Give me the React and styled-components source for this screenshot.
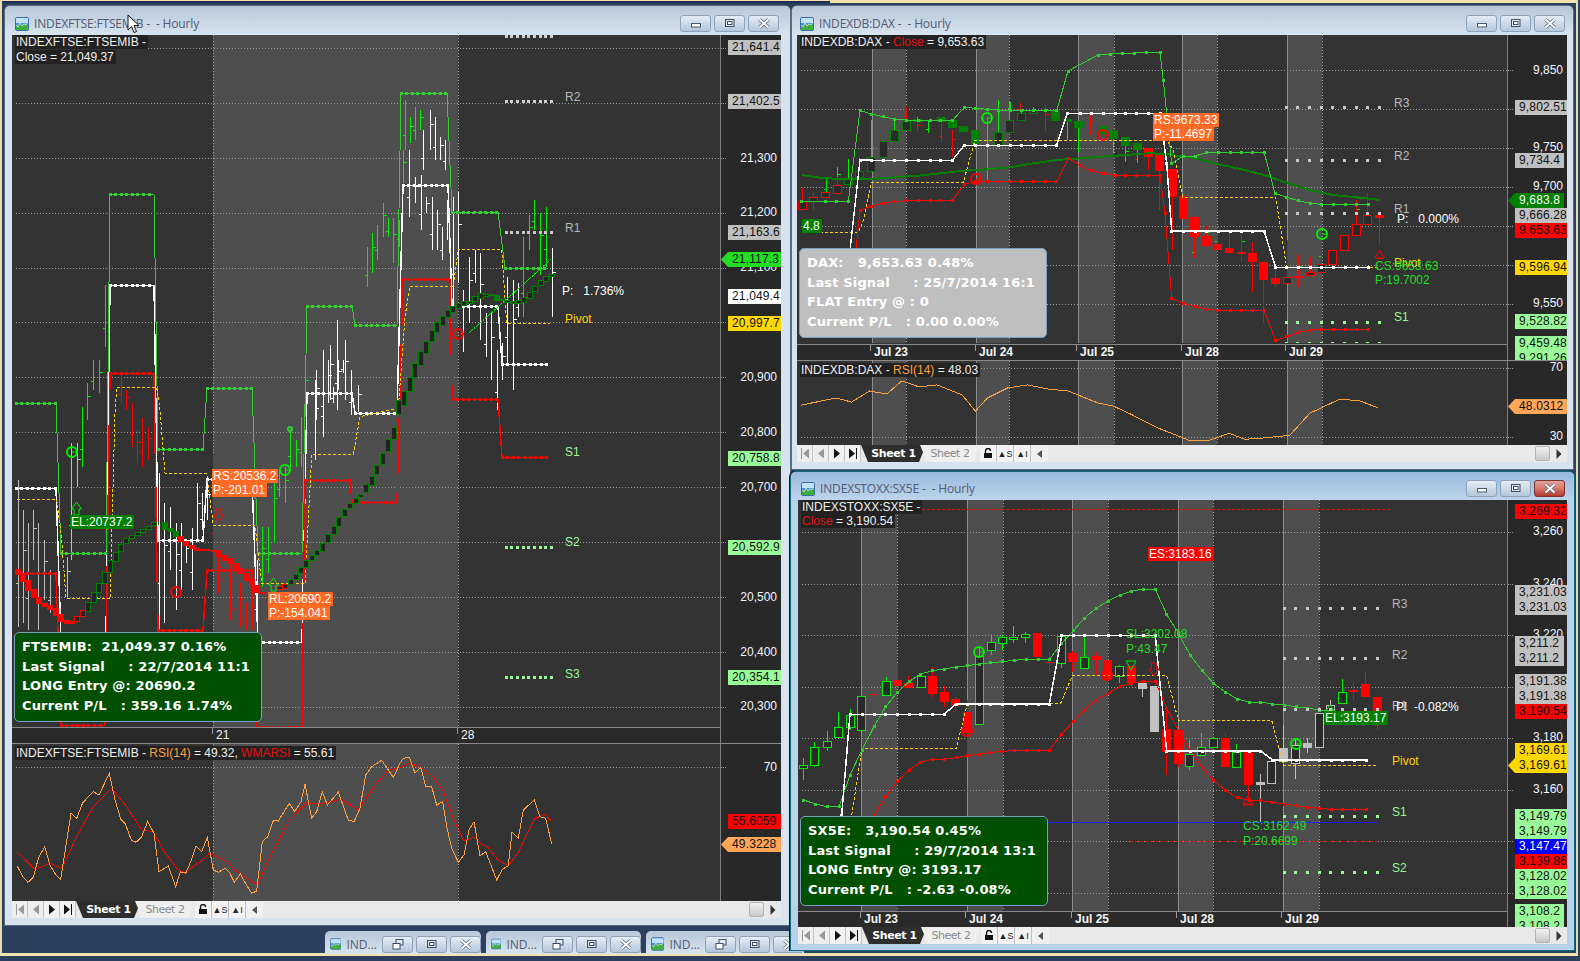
import React from "react";
import styled, { createGlobalStyle } from "styled-components";

const Global = createGlobalStyle`
  html, body { margin: 0; padding: 0; background: #2d3f5e; overflow: hidden; }
  * { box-sizing: border-box; }
`;

const SANS = `"Liberation Sans", Arial, sans-serif`;

const Desktop = styled.div`
  position: relative; width: 1580px; height: 961px; overflow: hidden; background: #2d3f5e;
`;
const OuterFrame = styled.div`
  position: absolute; left: 0; top: 0; width: 1578px; height: 956px;
  border-top: 3px solid #f3e3ac; border-bottom: 3px solid #f3e3ac;
  border-left: 2px solid #e8dcae; border-right: 2px solid #e8dcae;
`;
const TopNavyEdge = styled.div`
  position: absolute; left: 2px; top: 1px; width: 828px; height: 2px; background: #1f2f52;
`;

const Win = styled.section`
  position: absolute; left: ${p => p.$l}px; top: ${p => p.$t}px; width: ${p => p.$w}px; height: ${p => p.$h}px;
  display: flex; flex-direction: column;
  padding: 0 ${p => p.$pr}px ${p => p.$pb}px ${p => p.$pl}px;
  background: ${p => (p.$active ? "#b9d2ec" : "#d7e3ef")};
  border-radius: 5px 5px 0 0;
  box-shadow: ${p => (p.$active ? "0 0 0 1px #0d6f80, -1px 0 0 1px #111" : "0 0 0 1px #5b6b7e")};
`;
const TitleBar = styled.header`
  flex: none; height: ${p => p.$h}px; display: flex; align-items: center; gap: 5px;
  padding: ${p => p.$pt}px 2px 0 3px;
  margin: 0 -${p => p.$pr}px 0 -${p => p.$pl}px;
  padding-left: ${p => p.$pl + 3}px; padding-right: ${p => p.$pr + 2}px;
  border-radius: 5px 5px 0 0;
  background: ${p => (p.$active ? "linear-gradient(#98b9dc, #bdd4ec)" : "linear-gradient(#b7c7d7, #d7e4f0)")};
`;
const TitleText = styled.span`
  font: 12px "Open Sans", sans-serif; color: #555a74; white-space: pre; letter-spacing: -0.15px;
`;
const TitleButtons = styled.div`
  margin-left: auto; display: flex; gap: 3px;
`;
const CapButton = styled.div`
  width: 31px; height: 17px; display: flex; align-items: center; justify-content: center;
  border: 1px solid ${p => (p.$close ? "#7c3030" : "#8ea2ba")}; border-radius: 3px;
  background: ${p => (p.$close ? "linear-gradient(#e3a49c 0%, #d8786c 50%, #b23a2c 100%)" : "linear-gradient(#e4edf5 0%, #ccdae8 50%, #b4c7da 100%)")};
`;
const Client = styled.div`
  flex: 1; display: flex; flex-direction: column; min-height: 0;
`;
const Pane = styled.div`
  flex: none; height: ${p => p.$h}px; display: flex; overflow: hidden;
  border-top: ${p => (p.$sep ? "1px solid #8a8a8a" : "none")};
`;
const PlotColumn = styled.div`
  flex: 1; min-width: 0; display: flex; flex-direction: column;
`;
const PlotBox = styled.div`
  flex: 1; min-height: 0; position: relative; overflow: hidden; background: #333333;
`;
const ChartSvg = styled.svg`
  display: block; position: absolute; left: 0; top: 0;
`;
const DateStrip = styled.div`
  flex: none; height: 16px; position: relative; background: #2a2a2a; border-top: 1px solid #8a8a8a;
`;
const DateLabel = styled.span`
  position: absolute; left: ${p => p.$x + 4}px; top: 0; font: ${p => (p.$bold ? "bold " : "")}12px/15px ${SANS}; color: #f4f4f4;
  &::before { content: ""; position: absolute; left: -4px; top: 0; width: 1px; height: 6px; background: #9a9a9a; }
`;
const Axis = styled.div`
  flex: none; width: ${p => p.$w}px; position: relative; overflow: hidden; background: #282828; border-left: 1px solid #808080;
`;
const AxisTick = styled.i`
  position: absolute; left: 0; top: ${p => p.$y}px; width: 5px; border-top: 1px dotted #9a9a9a;
`;
const AxisLabel = styled.span`
  position: absolute; right: 4px; top: ${p => p.$y - 7}px; font: 12px/14px ${SANS}; color: #f2f6ff;
`;
const PriceTag = styled.span`
  position: absolute; top: ${p => p.$y}px; height: 15px; left: ${p => (p.$arrow ? 0 : 7)}px;
  width: ${p => (p.$short ? (p.$arrow ? 56 : 49) : p.$arrow ? 60 : 53)}px;
  padding-left: ${p => (p.$arrow ? 11 : 4)}px;
  font: 12px/15px ${SANS}; letter-spacing: 0.15px; white-space: nowrap; overflow: hidden;
  color: ${p => p.$fg || "#111"}; background: ${p => p.$bg};
  clip-path: ${p => (p.$arrow ? "polygon(7px 0, 100% 0, 100% 100%, 7px 100%, 0 50%)" : "none")};
`;
const Legend = styled.div`
  position: absolute; left: ${p => p.$x}px; top: ${p => p.$y}px; display: flex; flex-direction: column; align-items: flex-start; gap: ${p => p.$gap || 0}px;
`;
const LegendLine = styled.div`
  background: #222222; color: #f0f0f0; font: 12px/14px ${SANS}; padding: 0 2px 0 1px; white-space: pre;
`;
const Tint = styled.span`
  color: ${p => p.$c};
`;
const SignalTag = styled.div`
  position: absolute; left: ${p => p.$x}px; top: ${p => p.$y}px; padding: 0 2px 0 1px;
  font: 12px/14px ${SANS}; white-space: pre; color: #fff; background: ${p => p.$bg};
`;
const InfoBox = styled.div`
  position: absolute; left: ${p => p.$x}px; top: ${p => p.$y}px; width: ${p => p.$w}px; height: ${p => p.$h}px;
  padding: 4px 0 0 7px; border: 1px solid #7b9fbe; border-radius: 5px;
  background: ${p => p.$bg}; color: #fff;
`;
const InfoLine = styled.div`
  font: bold 13px/19.7px "DejaVu Sans", sans-serif; white-space: pre; letter-spacing: 0.15px;
`;
const ChartText = styled.text`
  font: 12px ${SANS}; fill: ${p => p.$c}; white-space: pre;
`;
const SheetBar = styled.div`
  flex: none; height: 17px; display: flex; align-items: stretch; background: #e9e9e9;
`;
const NavBtn = styled.div`
  width: 16px; display: flex; align-items: center; justify-content: center;
  border-right: 1px solid #c4c4c4; background: ${p => (p.$dim ? "#eeeeee" : "#f1f1f1")};
`;
const SheetTab = styled.div`
  width: ${p => p.$w}px; margin-left: ${p => p.$ml || 0}px; display: flex; align-items: center; justify-content: center;
  font: ${p => (p.$on ? "bold" : "normal")} 11px "DejaVu Sans", sans-serif; letter-spacing: -0.45px;
  color: ${p => (p.$on ? "#ffffff" : "#8a8a8a")};
  background: ${p => (p.$on ? "#2e2e2e" : "#efefef")};
  clip-path: polygon(0 0, 100% 0, calc(100% - 7px) 100%, 7px 100%);
`;
const LockBtn = styled.div`
  width: 17px; display: flex; align-items: center; justify-content: center;
  font: 9px ${SANS}; color: #222; border-right: 1px solid #c0c0c0; background: #f2f2f2; white-space: pre;
`;
const LeftScroll = styled.div`
  width: 17px; margin-left: 0; display: flex; align-items: center; justify-content: center; background: #f0f0f0;
`;
const Thumb = styled.div`
  margin-left: auto; width: 15px; margin-top: 1px; margin-bottom: 1px; border: 1px solid #b4b4b4; border-radius: 2px;
  background: linear-gradient(#f2f2f2, #c8c8c8);
`;
const RightScroll = styled.div`
  width: 17px; display: flex; align-items: center; justify-content: center;
`;
const MiniWin = styled.div`
  position: absolute; left: ${p => p.$l}px; top: 931px; width: ${p => p.$w}px; height: 23px;
  display: flex; align-items: center; gap: 5px; padding: 3px 0 0 5px;
  border-radius: 5px 5px 0 0; background: linear-gradient(#b7c7d7, #d7e4f0);
`;
const MiniText = styled.span`
  font: 12px "Open Sans", sans-serif; color: #555a74; width: 31px;
`;
const MiniButtons = styled.div`
  display: flex; gap: 3px;
`;
const Cursor = styled.svg`
  position: absolute; left: 127px; top: 14px;
`;

/* ---------- icons ---------- */
const AppIcon = () => (
  <svg width="14" height="14" viewBox="0 0 14 14">
    <rect x="0.5" y="0.5" width="13" height="13" rx="1.5" fill="#4d90d6" stroke="#3a6ea8" />
    <rect x="1" y="1" width="12" height="5" fill="#bfe0f7" />
    <path d="M1 13V8l2 2 2-4 2 3 2-2 2 1 2-3v8z" fill="#3fae3f" />
    <path d="M1 8l2 2 2-4 2 3 2-2 2 1 2-3" fill="none" stroke="#fff" strokeWidth="0.6" />
  </svg>
);
const MinGlyph = () => (
  <svg width="12" height="8" viewBox="0 0 12 8"><rect x="1.5" y="3.5" width="9" height="3.5" fill="#fff" stroke="#4a5a70" /></svg>
);
const MaxGlyph = () => (
  <svg width="12" height="9" viewBox="0 0 12 9"><rect x="1.5" y="0.5" width="8.5" height="7" fill="#dfe8f1" stroke="#3e4e64" /><rect x="3.5" y="2.5" width="4.5" height="3" fill="#fff" stroke="#3e4e64" /></svg>
);
const RestoreGlyph = () => (
  <svg width="12" height="11" viewBox="0 0 12 11"><rect x="4" y="0.5" width="7" height="5.5" fill="#dfe8f1" stroke="#3e4e64" /><rect x="1" y="4.5" width="7" height="5.5" fill="#fff" stroke="#3e4e64" /></svg>
);
const CloseGlyph = () => (
  <svg width="14" height="11" viewBox="0 0 14 11"><path d="M2.5 1.5L11.5 9.5M11.5 1.5L2.5 9.5" stroke="#5b6b7f" strokeWidth="3.6" /><path d="M2.5 1.5L11.5 9.5M11.5 1.5L2.5 9.5" stroke="#fff" strokeWidth="2" /></svg>
);

const WindowTitle = ({ text, active, h, pt, pl, pr }) => (
  <TitleBar $h={h} $pt={pt} $pl={pl} $pr={pr} $active={active}>
    <AppIcon />
    <TitleText>{text}</TitleText>
    <TitleButtons>
      <CapButton><MinGlyph /></CapButton>
      <CapButton><MaxGlyph /></CapButton>
      <CapButton $close={active}><CloseGlyph /></CapButton>
    </TitleButtons>
  </TitleBar>
);

const Sheets = () => (
  <SheetBar>
    <NavBtn $dim><svg width="10" height="11" viewBox="0 0 10 11"><path d="M1.5 0v11" stroke="#999" /><path d="M9 0.5v10L3 5.5z" fill="#999" /></svg></NavBtn>
    <NavBtn $dim><svg width="8" height="11" viewBox="0 0 8 11"><path d="M7 0.5v10L1 5.5z" fill="#999" /></svg></NavBtn>
    <NavBtn><svg width="8" height="11" viewBox="0 0 8 11"><path d="M1 0.5v10L7 5.5z" fill="#111" /></svg></NavBtn>
    <NavBtn><svg width="10" height="11" viewBox="0 0 10 11"><path d="M8.5 0v11" stroke="#111" /><path d="M1 0.5v10L7 5.5z" fill="#111" /></svg></NavBtn>
    <SheetTab $on $w={65}>Sheet 1</SheetTab>
    <SheetTab $w={60} $ml={-6}>Sheet 2</SheetTab>
    <LockBtn><svg width="10" height="11" viewBox="0 0 10 11"><path d="M2.5 5V3a2.5 2.5 0 0 1 5 0" fill="none" stroke="#111" strokeWidth="1.4" /><rect x="1" y="5" width="8" height="5" fill="#111" /></svg></LockBtn>
    <LockBtn>{"▲S"}</LockBtn>
    <LockBtn>{"▲I"}</LockBtn>
    <LeftScroll><svg width="6" height="8" viewBox="0 0 6 8"><path d="M5 0v8L0 4z" fill="#555" /></svg></LeftScroll>
    <Thumb />
    <RightScroll><svg width="6" height="10" viewBox="0 0 6 10"><path d="M0.5 0v10L5.5 5z" fill="#333" /></svg></RightScroll>
  </SheetBar>
);

/* ---------- data helpers ---------- */
const z = (ox, oy, arr) => arr.map(r => (r.length === 3 ? [ox + r[0] / 3, oy + r[1] / 3, oy + r[2] / 3] : [ox + r[0] / 3, oy + r[1] / 3]));
const poly = pts => pts.map(p => p.map(v => +v.toFixed(1)).join(",")).join(" ");
const GREEN = "#00ee00", MID = "#33cc33", DARK = "#008000", RED = "#ff0000", WHITE = "#ffffff", GREY = "#c0c0c0", GOLD = "#ffd000", PALE = "#98f898", LBL = "#22dd22";

const L = ({ pts, c, w = 1, dash }) => (
  <polyline points={poly(pts)} fill="none" stroke={c} strokeWidth={w} strokeDasharray={dash} shapeRendering="crispEdges" />
);
const Squares = ({ pts, c, s = 3 }) => pts.map((p, i) => (
  <rect key={i} x={Math.round(p[0] - s / 2)} y={Math.round(p[1] - s / 2)} width={s} height={s} fill={c} />
));
const DotRun = ({ x1, x2, y, step, c, s = 3 }) => {
  const pts = [];
  for (let x = x1; x <= x2; x += step) pts.push([x, y]);
  return <Squares pts={pts} c={c} s={s} />;
};
const Background = ({ x0, y0, w, h, bands, grid, gx1, solid }) => (
  <>
    {bands.map(([a, b], i) => <rect key={i} x={a} y={y0} width={b - a} height={h} fill="#4e4e4e" />)}
    {grid.map((y, i) => <line key={i} x1={gx1} x2={x0 + w} y1={y + 0.5} y2={y + 0.5} stroke="#9a9a9a" strokeDasharray="1 2" shapeRendering="crispEdges" />)}
    {bands.map(([a, b], i) => (
      <g key={i}>
        <line x1={a + 0.5} x2={a + 0.5} y1={y0} y2={y0 + h} stroke={solid ? "#8c8c8c" : "#a0a0a0"} strokeDasharray={solid ? undefined : "1 2"} shapeRendering="crispEdges" />
        <line x1={b + 0.5} x2={b + 0.5} y1={y0} y2={y0 + h} stroke="#a0a0a0" strokeDasharray="1 2" shapeRendering="crispEdges" />
      </g>
    ))}
  </>
);
const Bars = ({ list, c, w = 1 }) => (
  <g shapeRendering="crispEdges" stroke={c} strokeWidth={w}>
    {list.map(([x, a, b], i) => {
      const X = Math.round(x) + 0.5, m = Math.round(a + (b - a) * (i % 2 ? 0.35 : 0.7)) + 0.5;
      return (
        <g key={i}>
          <line x1={X} x2={X} y1={a} y2={b} />
          <line x1={X} x2={X + (i % 2 ? 3 : -3)} y1={m} y2={m} />
        </g>
      );
    })}
  </g>
);
const CANDLE = {
  gh: ["#2a2a2a", GREEN, GREEN], dg: ["#2a2a2a", DARK, GREEN], gf: [DARK, DARK, GREEN], rh: ["#2a2a2a", RED, RED],
  rf: [RED, RED, RED], sf: [GREY, GREY, GREY], sh: ["#2a2a2a", GREY, GREY],
};
const Candles = ({ list, ox, oy, bw = 8 }) => (
  <g shapeRendering="crispEdges">
    {list.map(([X, w1, w2, b1, b2, k], i) => {
      const [f, s, wc] = CANDLE[k];
      const x = Math.round(ox + X / 3);
      return (
        <g key={i}>
          <line x1={x + 0.5} x2={x + 0.5} y1={oy + w1 / 3} y2={oy + w2 / 3} stroke={wc} />
          <rect x={x - bw / 2 + 0.5} y={Math.round(oy + b1 / 3) + 0.5} width={bw} height={Math.max(1, Math.round((b2 - b1) / 3))} fill={f} stroke={s} />
        </g>
      );
    })}
  </g>
);
const Ring = ({ x, y, c, r = 5 }) => (
  <g stroke={c} fill="none">
    <circle cx={x} cy={y} r={r} strokeWidth="2" />
    <line x1={x} x2={x + r} y1={y} y2={y} />
  </g>
);
const UpArrow = ({ x, y, c }) => (
  <path d={`M${x} ${y}l5 7h-2.5v6h-5v-6h-2.5z`} fill="none" stroke={c} />
);
const DownArrow = ({ x, y, c }) => (
  <path d={`M${x} ${y}l5 -7h-2.5v-6h-5v6h-2.5z`} fill="none" stroke={c} />
);

/* ---------- Left chart data ---------- */
const stepBand = (segs, c, w, step = 5.6) => (
  <g>
    {segs.map(([a, b, y], i) => (
      <g key={i}>
        <rect x={a} y={y - 0.5} width={b - a} height={1} fill={c} shapeRendering="crispEdges" />
        <DotRun x1={a} x2={b} y={y} step={step} c={c} s={3} />
        {segs[i + 1] && <L pts={[[b, y], [segs[i + 1][0], segs[i + 1][2]]]} c={c} w={w} />}
      </g>
    ))}
  </g>
);
const A_GREEN = [[16, 56, 403], [61, 106, 553], [110, 154, 194], [158, 203, 449], [207, 252, 388], [258, 302, 553], [307, 352, 306], [355, 397, 325], [401, 447, 93], [452, 498, 212], [505, 548, 268]];
const A_WHITE = [[16, 56, 488], [61, 106, 639], [110, 154, 285], [158, 203, 540], [207, 252, 479], [258, 302, 642], [307, 352, 393], [355, 397, 413], [403, 448, 185], [452, 498, 306], [502, 548, 364]];
const A_RED = [[16, 56, 573], [61, 105, 725], [110, 154, 373], [158, 203, 630], [207, 252, 570], [256, 302, 727], [305, 350, 480], [352, 397, 502], [403, 450, 279], [452, 498, 399], [502, 548, 457]];
const A_YEL = [...z(0, 360, [[52, 418], [170, 418], [185, 540], [198, 715], [330, 717], [345, 160], [350, 82], [470, 82], [480, 150], [495, 340], [620, 340], [640, 497], [765, 497], [785, 670], [915, 672], [935, 283], [1060, 283], [1080, 170]]), ...z(360, 150, [[115, 775], [135, 500], [150, 408], [280, 408], [295, 298], [425, 298], [440, 520], [570, 520]])];

const A_STAIR = [
  [52, 635, 15, "r"], [67, 650, 25, "r"], [82, 674, 30, "r"], [100, 700, 25, "r"], [116, 720, 18, "r"], [133, 733, 10, "r"], [148, 741, 12, "r"], [165, 753, 20, "r"], [180, 772, 20, "r"], [200, 785, 10, "r"], [215, 787, 5, "r"], [230, 777, 16, "h"], [247, 760, 18, "h"], [263, 738, 26, "d"], [280, 712, 30, "d"], [296, 684, 28, "d"], [313, 653, 34, "d"], [328, 618, 36, "d"], [345, 588, 26, "d"], [362, 562, 22, "d"], [377, 542, 14, "d"], [395, 530, 10, "d"], [412, 520, 10, "d"], [428, 512, 10, "d"], [445, 504, 10, "d"], [460, 490, 10, "d"], [493, 495, 20, "g"], [510, 509, 10, "g"], [527, 521, 16, "g"], [542, 535, 16, "r"], [557, 550, 12, "r"], [575, 561, 10, "r"], [590, 567, 5, "r"], [605, 569, 4, "r"], [620, 570, 4, "r"], [640, 570, 3, "r"], [655, 578, 18, "r"], [673, 591, 14, "r"], [690, 602, 14, "r"], [705, 618, 18, "r"], [720, 631, 16, "r"], [737, 648, 20, "r"], [753, 665, 16, "r"], [768, 687, 22, "r"], [785, 697, 4, "r"], [838, 682, 10, "h"], [853, 678, 12, "h"], [870, 665, 16, "d"], [885, 650, 16, "d"], [902, 630, 18, "d"], [917, 610, 20, "d"], [935, 592, 16, "d"], [950, 578, 14, "d"], [967, 560, 24, "d"], [983, 535, 24, "d"], [1000, 510, 24, "d"], [1016, 485, 26, "d"], [1032, 458, 20, "d"], [1048, 438, 16, "d"], [1065, 420, 14, "d"], [1080, 408, 10, "d"], [1095, 385, 24, "d"], [1113, 360, 26, "d"], [1130, 330, 28, "d"], [1146, 295, 32, "d"],
  [1163, 255, 36, "d"], [1180, 220, 36, "d"],
].map(([X, Y, h, k]) => [X / 3, 360 + Y / 3, h / 3, k]);
const A_STAIR2 = z(360, 150, [[115, 770], [130, 745], [148, 703], [163, 660], [181, 625], [197, 590], [214, 558], [230, 532], [247, 510], [262, 490], [278, 477], [295, 466], [310, 458], [328, 455], [344, 446], [360, 437], [375, 435], [392, 435], [408, 442], [425, 450], [440, 453], [458, 456], [475, 455], [490, 448], [508, 434], [523, 415], [541, 398], [557, 385], [573, 376]]);
const STAIR_H = [42, 42, 42, 42, 42, 36, 34, 30, 26, 22, 18, 14, 12, 6, 14, 14, 6, 4, 16, 4, 6, 6, 10, 16, 18, 16, 16, 14, 6];

const A_BARS = {
  grey: z(0, 360, [[55, 360, 800], [70, 450, 790], [85, 490, 810], [100, 450, 600], [115, 490, 810], [133, 540, 720], [150, 630, 760], [200, 590, 710], [213, 250, 600], [230, 250, 380]]),
  green: [...z(0, 360, [[245, 140, 320], [262, 70, 180], [280, 0, 90], [296, 0, 100], [315, -225, -40], [787, 500, 680], [805, 500, 640], [822, 340, 550], [838, 330, 410], [855, 320, 430], [870, 210, 320], [887, 240, 320], [903, 170, 320], [915, 0, 170]]),
    ...z(360, 150, [[20, 290, 410], [35, 250, 370], [50, 225, 330], [68, 160, 260], [85, 205, 260], [100, 205, 340], [118, 210, 290], [128, 0, 100], [135, -150, 0], [150, -100, -20], [165, -130, -30], [180, -120, -60], [490, 260, 500], [507, 195, 300], [523, 150, 240], [541, 190, 375], [557, 170, 350]])],
  red: z(0, 360, [[362, 40, 130], [378, 90, 150], [395, 130, 260], [410, 210, 310], [427, 175, 320], [445, 200, 300], [640, 280, 620], [655, 580, 700], [670, 580, 690], [690, 600, 780], [705, 680, 770], [720, 670, 800], [738, 730, 810], [755, 700, 810]]),
  white: [...z(0, 360, [[478, 340, 810], [493, 430, 790], [510, 440, 630], [527, 490, 750], [542, 490, 690], [558, 540, 610], [575, 505, 690], [590, 370, 540], [605, 400, 510], [620, 360, 480], [770, 600, 810], [945, 60, 300], [968, 20, 230], [985, 0, 130], [1000, 80, 130], [1015, 0, 90], [1030, 0, 40]]),
    [316, 370, 420], [323, 350, 430], [330, 345, 400], [337, 320, 410], [345, 340, 400], [351, 370, 415], [358, 385, 412],
    ...z(360, 150, [[148, 0, 200], [165, 80, 160], [182, 75, 240], [198, 140, 190], [215, 140, 300], [230, 180, 300], [247, 230, 330], [262, 150, 270], [278, 140, 470], [295, 125, 400], [310, 420, 605], [328, 320, 520], [345, 300, 400], [360, 310, 570], [378, 490, 620], [392, 490, 690], [410, 600, 780], [425, 580, 690], [442, 380, 640], [458, 390, 720], [475, 400, 500], [575, 295, 500], [190, -60, 60], [210, -120, 0], [225, -100, 30], [240, -40, 30], [255, -30, 60]])],
};
const RSI_O = [...z(0, 620, [[52, 738], [68, 770], [84, 787], [100, 772], [116, 712], [134, 680], [150, 735], [168, 765], [182, 778], [213, 580], [230, 595], [248, 548], [280, 515], [297, 525], [328, 460], [345, 540], [362, 597], [376, 612], [394, 660], [408, 667], [425, 650], [443, 604], [462, 640], [477, 755], [505, 738], [527, 800], [541, 755], [557, 760], [572, 725], [588, 677], [605, 695], [622, 652], [640, 750], [655, 757], [675, 745], [690, 760], [703, 787], [721, 762], [738, 793], [755, 820], [770, 813], [787, 665], [803, 650], [820, 602], [835, 603], [868, 550], [884, 575], [903, 545], [915, 493], [935, 595], [950, 575], [967, 515], [982, 555], [1015, 517], [1045, 600], [1062, 605], [1080, 565], [1097, 465], [1115, 440], [1145, 421], [1180, 472]]),
  ...z(400, 700, [[0, 190], [10, 175], [28, 172], [45, 220], [62, 202], [77, 260], [95, 260], [110, 315], [128, 305], [140, 380], [155, 445], [175, 487], [192, 465], [207, 390], [222, 365], [240, 468], [257, 455], [290, 540], [307, 508], [325, 497], [336, 397], [355, 415], [370, 330], [403, 300], [420, 350], [437, 355], [455, 432]])];
const RSI_R = [...z(0, 620, [[52, 697], [105, 748], [150, 730], [185, 745], [230, 650], [280, 560], [335, 505], [380, 560], [425, 630], [460, 635], [490, 690], [530, 745], [555, 760], [585, 735], [610, 720], [628, 700], [680, 725], [705, 750], [740, 775], [772, 795], [810, 710], [865, 605], [920, 548], [960, 552], [1020, 538], [1075, 568], [1130, 490], [1165, 450]]),
  ...z(400, 700, [[0, 202], [30, 190], [62, 202], [97, 228], [128, 270], [160, 355], [190, 422], [222, 412], [240, 430], [262, 440], [295, 480], [325, 497], [355, 457], [403, 357], [435, 342], [453, 362]])];

/* ---------- DAX data ---------- */
const Z7 = a => z(790, 80, a), Z8 = a => z(1130, 80, a);
const D_GREEN = [...Z7([[35, 365], [107, 365], [140, 365], [175, 365], [210, 92], [245, 102], [280, 110], [312, 118], [350, 120], [385, 120], [420, 120], [452, 122], [487, 122], [523, 82], [557, 85], [592, 88], [625, 90], [660, 90], [695, 92], [730, 92], [765, 92], [800, 92]]), [1068, 71], [1098, 55], [1110, 54], [1122, 53], [1134, 53], [1146, 52], [1160, 52], ...Z8([[100, 0], [125, 250], [160, 228], [195, 228], [230, 218], [265, 216], [300, 216], [335, 216], [368, 216], [402, 216], [435, 340], [470, 352], [505, 362], [540, 370], [575, 373], [610, 373], [645, 373], [680, 373], [715, 373]])];
const D_RED = [...Z7([[198, 508], [210, 390], [245, 378], [280, 370], [312, 365], [350, 362], [385, 362], [420, 362], [452, 362], [487, 362], [523, 312], [557, 305], [592, 305], [625, 305], [660, 305], [695, 305], [730, 305], [765, 305], [800, 305], [835, 235], [870, 255], [905, 272], [940, 280], [975, 285], [1005, 286], [1040, 286], [1075, 286], [1110, 286], [1125, 400]]), ...Z8([[125, 655], [160, 670], [195, 680], [230, 688], [265, 691], [300, 691], [335, 691], [368, 691], [402, 690], [437, 782], [470, 770], [505, 757], [540, 750], [575, 748], [610, 748], [645, 748], [680, 748], [715, 748]])];
const D_WHITE = [...Z7([[180, 510], [210, 240], [245, 241], [280, 241], [312, 241], [350, 241], [385, 241], [420, 241], [452, 241], [487, 241], [523, 196], [557, 196], [592, 196], [625, 196], [660, 196], [695, 196], [730, 196], [765, 196], [800, 196], [832, 100], [870, 100], [905, 100], [940, 100], [975, 100], [1005, 100], [1040, 100], [1075, 100], [1110, 100], [1130, 250]]), ...Z8([[125, 453], [160, 453], [195, 453], [230, 453], [265, 453], [300, 453], [335, 453], [368, 453], [402, 453], [437, 562], [470, 562], [505, 562], [540, 562], [575, 562], [610, 562], [645, 562], [680, 562], [715, 562]])];
const D_YEL = [...Z7([[90, 458], [205, 458], [220, 420], [245, 307], [520, 307], [555, 180], [1130, 180], [1150, 210]]), ...Z8([[158, 352], [437, 352], [470, 562], [750, 562]])];
const D_MA = [...Z7([[35, 285], [105, 295], [175, 297], [245, 297], [310, 292], [385, 287], [452, 280], [523, 272], [592, 268], [660, 262], [730, 250], [800, 240], [870, 235], [940, 230], [1005, 225], [1075, 220], [1145, 222]]), ...Z8([[125, 225], [195, 235], [265, 253], [335, 268], [402, 285], [470, 308], [540, 330], [610, 345], [680, 352], [750, 360]])];
const D_C7 = [
  [37, 325, 388, 363, 388, "rh"], [70, 340, 390, 352, 365, "rh"], [105, 320, 352, 337, 352, "rh"], [140, 290, 337, 314, 337, "rh"],
  [175, 238, 315, 295, 314, "dg"], [208, 235, 290, 272, 290, "dg"], [243, 120, 272, 230, 272, "dg"], [278, 182, 230, 182, 230, "dg"], [312, 115, 183, 150, 183, "dg"], [347, 118, 148, 122, 148, "dg"], [380, 112, 122, 116, 122, "dg"], [452, 112, 124, 112, 124, "gf"], [487, 120, 140, 120, 140, "gf"], [520, 138, 152, 138, 152, "gf"], [556, 150, 190, 150, 190, "gf"], [625, 60, 193, 155, 193, "dg"], [658, 65, 155, 120, 155, "dg"], [694, 88, 122, 100, 122, "dg"], [728, 80, 100, 90, 100, "dg"], [795, 92, 120, 92, 120, "gf"], [830, 118, 180, 118, 125, "gf"], [865, 123, 215, 123, 140, "gf"], [938, 138, 158, 138, 158, "gf"], [970, 150, 220, 150, 173, "gf"], [1005, 172, 247, 172, 195, "gf"], [1040, 190, 250, 190, 207, "gf"],
  [1075, 205, 270, 205, 230, "rf"], [1108, 225, 390, 225, 270, "rf"], [1145, 268, 510, 268, 350, "rf"], [1178, 348, 530, 348, 415, "rf"],
];
const D_C8 = [
  [193, 412, 535, 412, 470, "rf"], [227, 437, 500, 468, 495, "rf"], [262, 455, 506, 492, 506, "rf"], [297, 455, 518, 505, 518, "rf"], [332, 450, 545, 516, 520, "rf"], [367, 485, 635, 520, 545, "rf"], [400, 545, 730, 545, 597, "rf"], [436, 565, 622, 594, 609, "rf"], [470, 480, 607, 590, 607, "rh"], [505, 525, 620, 588, 592, "rf"], [540, 530, 586, 577, 586, "rh"], [574, 470, 578, 553, 578, "rh"], [607, 511, 554, 511, 554, "rh"], [643, 466, 511, 466, 511, "rh"], [677, 360, 466, 433, 466, "rh"], [712, 340, 433, 405, 433, "rh"], [747, 404, 495, 404, 409, "rf"],
];
const D_BARS_G = [...Z7([[107, 297, 340], [140, 262, 315], [415, 120, 160], [590, 115, 300], [660, 65, 90], [1005, 195, 247]]), ...Z8([[193, 470, 535], [227, 437, 495], [262, 455, 495], [332, 450, 545], [436, 565, 622], [505, 525, 620], [574, 470, 553], [677, 360, 433]])];
const D_BARS_R = [...Z7([[347, 80, 122], [382, 123, 155], [452, 130, 185], [487, 150, 230], [690, 70, 95], [765, 75, 155], [800, 155, 190], [900, 100, 165], [1040, 207, 250]])];
const D_RSI = [[795, 402], [830, 395], [845, 399], [863, 388], [880, 391], [895, 378], [912, 384], [930, 382], [955, 392], [968, 408], [980, 395], [1000, 385], [1020, 382], [1040, 386], [1060, 388], [1090, 400], [1105, 403], [1120, 410], [1150, 425], [1180, 437], [1200, 437], [1220, 430], [1235, 436], [1250, 435], [1280, 432], [1300, 410], [1330, 396], [1350, 398], [1368, 405]].map(([x, y]) => [x / 0.9924, y / 0.9924]);

/* ---------- SX5E data ---------- */
const Z9 = a => z(800, 540, a), Z10 = a => z(1130, 640, a);
const S_GREEN = [...Z9([[10, 780], [47, 792], [82, 800], [117, 800], [150, 705], [186, 630], [222, 560], [257, 500], [292, 457], [327, 425], [362, 402], [397, 392], [432, 387], [468, 381], [502, 377], [538, 372], [572, 368], [607, 365], [643, 361], [679, 358], [714, 358], [748, 358], [785, 310], [820, 272], [853, 235], [888, 205], [925, 183], [960, 165], [995, 153], [1030, 148], [1066, 148], [1100, 223], [1135, 280], [1170, 345]]), ...Z10([[180, 45], [217, 92], [250, 130], [287, 157], [322, 177], [357, 186], [392, 186], [428, 192], [463, 195], [498, 200], [533, 205], [568, 210], [603, 212]])];
const S_RED = [...Z9([[222, 825], [257, 770], [292, 724], [327, 690], [362, 667], [397, 657], [432, 657], [468, 653], [502, 647], [538, 643], [572, 637], [607, 635], [643, 631], [679, 631], [714, 631], [748, 631], [785, 583], [820, 545], [853, 510], [888, 480], [925, 460], [960, 440], [995, 430], [1030, 424], [1066, 424]]), ...Z10([[110, 205], [145, 270], [180, 330], [217, 382], [250, 420], [287, 452], [322, 472], [357, 482], [392, 482], [428, 487], [463, 492], [498, 497], [533, 502], [568, 505], [603, 508], [638, 508], [673, 508], [708, 508]])];
const S_WHITE = [...Z9([[125, 825], [150, 523], [186, 523], [222, 523], [257, 523], [292, 523], [327, 523], [362, 523], [397, 523], [432, 523], [468, 492], [502, 492], [538, 492], [572, 492], [607, 492], [643, 492], [679, 492], [714, 492], [748, 492], [785, 287], [820, 287], [853, 287], [888, 287], [925, 287], [960, 287], [995, 287], [1030, 287], [1066, 287], [1100, 633], [1135, 633]]), ...Z10([[145, 333], [180, 333], [217, 333], [250, 333], [287, 333], [322, 333], [357, 333], [392, 333], [428, 360], [463, 360], [498, 360], [533, 360], [568, 360], [603, 360], [638, 360], [673, 360], [710, 360]])];
const S_YEL = [...Z9([[155, 825], [186, 626], [468, 626], [502, 492], [782, 490], [817, 407], [1100, 407], [1135, 541]]), ...Z10([[425, 241], [460, 375], [740, 375]])];
const S_C9 = [
  [10, 655, 720, 675, 683, "gh"], [43, 605, 682, 622, 677, "gh"], [80, 573, 632, 604, 622, "gh"], [115, 515, 592, 562, 592, "gh"], [149, 508, 570, 524, 560, "gh"], [184, 445, 570, 469, 570, "gh"],
  [257, 410, 465, 422, 463, "gh"], [290, 370, 435, 420, 435, "rf"], [325, 407, 442, 430, 442, "rf"], [362, 408, 440, 408, 440, "gh"], [395, 382, 470, 408, 458, "rf"], [431, 437, 502, 456, 482, "rf"], [466, 472, 515, 478, 495, "rf"], [502, 480, 645, 515, 575, "rf"], [537, 325, 553, 348, 553, "gh"], [572, 283, 345, 307, 332, "gh"], [607, 285, 330, 292, 310, "gh"], [640, 258, 310, 292, 297, "gh"], [676, 277, 310, 283, 292, "gh"], [712, 279, 347, 279, 347, "rf"], [782, 287, 385, 287, 367, "gh"], [817, 333, 395, 340, 365, "rf"], [853, 287, 385, 350, 383, "gh"], [887, 335, 405, 349, 358, "rf"], [922, 360, 415, 360, 415, "rf"], [958, 375, 430, 377, 408, "gh"], [994, 378, 440, 378, 425, "rf"], [1027, 425, 472, 428, 443, "sf"], [1063, 438, 572, 438, 572, "sf"], [1099, 510, 705, 568, 635, "rf"], [1133, 570, 680, 570, 670, "rf"], [1168, 600, 690, 643, 680, "gh"],
];
const S_C10 = [
  [214, 280, 347, 322, 347, "gh"], [250, 295, 323, 295, 323, "gh"], [284, 280, 380, 295, 380, "rf"], [319, 312, 380, 335, 380, "gh"], [355, 335, 485, 335, 430, "rf"], [389, 402, 545, 427, 433, "sf"], [424, 362, 428, 362, 428, "sh"], [460, 255, 365, 325, 365, "sf"], [496, 300, 418, 315, 370, "sh"], [530, 295, 340, 310, 322, "sf"], [566, 218, 320, 218, 320, "sh"], [601, 180, 215, 195, 215, "sh"], [635, 118, 188, 155, 187, "gh"], [670, 127, 180, 150, 153, "rf"], [706, 97, 170, 133, 170, "rf"], [741, 170, 270, 172, 215, "rf"],
];

/* ---------- chart parts ---------- */
const AxisContent = ({ y0, ticks, labels, tags }) => (
  <>
    {ticks.map(t => <AxisTick key={t} $y={t - y0} />)}
    {labels.map(([y, s]) => <AxisLabel key={s} $y={y - y0}>{s}</AxisLabel>)}
    {tags.map(([y, s, bg, o = {}], i) => (
      <PriceTag key={i} $y={y - y0} $bg={bg} $fg={o.fg} $arrow={o.arrow} $short={o.short}>{s}</PriceTag>
    ))}
  </>
);
const TG = "#c0c0c0", TP = "#98fb98", TY = "#ffd700", TR = "#ff0000", TO = "#ffa658", TOR = "#ff6a26";

const ChartOne = () => {
  const ox = 12, oy = 35, w = 708, h = 692;
  const grid = [48, 103, 158, 213, 268, 322, 377, 432, 487, 542, 597, 652, 707];
  return (
    <Client>
      <Pane $h={708}>
        <PlotColumn>
          <PlotBox>
            <ChartSvg width={w} height={h} viewBox={`${ox} ${oy} ${w} ${h}`}>
              <Background x0={ox} y0={oy} w={w} h={h} bands={[[213, 458]]} grid={grid} gx1={16} />
              <Bars list={A_BARS.grey} c={GREY} />
              <Bars list={A_BARS.white} c={WHITE} />
              <Bars list={A_BARS.green} c={GREEN} />
              <Bars list={A_BARS.red} c={RED} />
              {stepBand(A_WHITE, WHITE, 1.5)}
              {stepBand(A_GREEN, MID, 1)}
              {stepBand(A_RED, RED, 1.5)}
              <L pts={A_YEL} c={GOLD} dash="3 2" />
              <L pts={z(360, 150, [[328, 548], [573, 328]])} c={GREEN} dash="2 1" />
              <g shapeRendering="crispEdges">
                {A_STAIR.map(([x, y, hh, k], i) => (
                  <rect key={i} x={Math.round(x - 2.5) + 0.5} y={Math.round(y - hh / 2) + 0.5} width={5} height={Math.max(1, Math.round(hh))}
                    fill={k === "r" ? RED : k === "g" ? DARK : "#222"} stroke={k === "r" || k === "h" ? RED : DARK} />
                ))}
                {A_STAIR2.map(([x, y], i) => (
                  <rect key={i} x={Math.round(x - 2.5) + 0.5} y={Math.round(y - STAIR_H[i] / 6) + 0.5} width={5} height={Math.max(1, Math.round(STAIR_H[i] / 3))}
                    fill={i === 18 ? DARK : "#222"} stroke={DARK} />
                ))}
              </g>
              <DotRun x1={506} x2={552} y={36} step={5.7} c="#d0d0d0" />
              <DotRun x1={506} x2={552} y={101} step={5.7} c="#d0d0d0" />
              <DotRun x1={506} x2={552} y={232} step={5.7} c="#c8c8c8" />
              <DotRun x1={506} x2={552} y={547} step={5.7} c={PALE} />
              <DotRun x1={506} x2={552} y={677} step={5.7} c={PALE} />
              <Ring x={72} y={452} c={GREEN} />
              <Ring x={285} y={470} c={GREEN} />
              <Ring x={290} y={429} c={MID} r={2} />
              <Ring x={176} y={592} c={RED} />
              <Ring x={458} y={334} c={RED} />
              <UpArrow x={76.5} y={502} c={GREEN} />
              <UpArrow x={273.5} y={578} c={GREEN} />
              <DownArrow x={218.5} y={522} c={RED} />
              <ChartText x={565} y={101} $c="#b8b8b8">R2</ChartText>
              <ChartText x={565} y={232} $c="#b8b8b8">R1</ChartText>
              <ChartText x={562} y={295} $c="#ffffff" xmlSpace="preserve">P:   1.736%</ChartText>
              <ChartText x={565} y={323} $c={GOLD}>Pivot</ChartText>
              <ChartText x={565} y={456} $c={PALE}>S1</ChartText>
              <ChartText x={565} y={546} $c={PALE}>S2</ChartText>
              <ChartText x={565} y={678} $c={PALE}>S3</ChartText>
            </ChartSvg>
            <Legend $x={3} $y={0} $gap={1}>
              <LegendLine>INDEXFTSE:FTSEMIB -</LegendLine>
              <LegendLine>Close = 21,049.37</LegendLine>
            </Legend>
            <SignalTag $x={58} $y={480} $bg={DARK}>EL:20737.2</SignalTag>
            <SignalTag $x={200} $y={434} $bg={TOR}>RS:20536.2</SignalTag>
            <SignalTag $x={200} $y={448} $bg={TOR}>P:-201.01</SignalTag>
            <SignalTag $x={256} $y={557} $bg={TOR}>RL:20690.2</SignalTag>
            <SignalTag $x={256} $y={571} $bg={TOR}>P:-154.041</SignalTag>
            <InfoBox $x={2} $y={597} $w={248} $h={90} $bg="#005000">
              <InfoLine>FTSEMIB:  21,049.37 0.16%</InfoLine>
              <InfoLine>Last Signal     : 22/7/2014 11:1</InfoLine>
              <InfoLine>LONG Entry @: 20690.2</InfoLine>
              <InfoLine>Current P/L   : 359.16 1.74%</InfoLine>
            </InfoBox>
          </PlotBox>
          <DateStrip>
            <DateLabel $x={200}>21</DateLabel>
            <DateLabel $x={445}>28</DateLabel>
          </DateStrip>
        </PlotColumn>
        <Axis $w={61}>
          <AxisContent y0={35} ticks={grid}
            labels={[[158, "21,300"], [212, "21,200"], [267, "21,100"], [377, "20,900"], [432, "20,800"], [487, "20,700"], [597, "20,500"], [652, "20,400"], [706, "20,300"]]}
            tags={[[40, "21,641.4", TG], [94, "21,402.5", TG], [225, "21,163.6", TG], [252, "21,117.3", "#22dd22", { arrow: true }], [289, "21,049.4", "#ffffff"], [316, "20,997.7", TY], [451, "20,758.8", TP], [540, "20,592.9", TP], [670, "20,354.1", TP]]} />
        </Axis>
      </Pane>
      <Pane $h={158} $sep>
        <PlotColumn>
          <PlotBox>
            <ChartSvg width={w} height={157} viewBox={`${ox} 744 ${w} 157`}>
              <Background x0={ox} y0={744} w={w} h={157} bands={[[213, 458]]} grid={[767]} gx1={16} />
              <L pts={RSI_R} c={RED} />
              <L pts={RSI_O} c="#ffa040" />
            </ChartSvg>
            <Legend $x={3} $y={2}>
              <LegendLine>INDEXFTSE:FTSEMIB - <Tint $c="#ffa040">RSI(14)</Tint> = 49.32, <Tint $c="#e01010">WMARSI</Tint> = 55.61</LegendLine>
            </Legend>
          </PlotBox>
        </PlotColumn>
        <Axis $w={61}>
          <AxisContent y0={744} ticks={[767]} labels={[[767, "70"]]}
            tags={[[814, "55.6059", TR], [837, "49.3228", TO, { arrow: true }]]} />
        </Axis>
      </Pane>
      <Sheets />
    </Client>
  );
};

const ChartTwo = () => {
  const ox = 797, oy = 35, w = 710, h = 308;
  const grid = [70, 109, 148, 187, 226, 265, 304];
  const bands = [[872, 906], [976, 1009], [1078, 1114], [1182, 1217], [1287, 1322]];
  return (
    <Client>
      <Pane $h={325}>
        <PlotColumn>
          <PlotBox>
            <ChartSvg width={w} height={h} viewBox={`${ox} ${oy} ${w} ${h}`}>
              <Background x0={ox} y0={oy} w={w} h={h} bands={bands} grid={grid} gx1={801} solid />
              <Bars list={D_BARS_G} c={GREEN} />
              <Bars list={D_BARS_R} c={RED} />
              <Candles list={D_C7} ox={790} oy={80} />
              <Candles list={D_C8} ox={1130} oy={80} />
              <L pts={D_MA} c={DARK} w={2} />
              <L pts={D_YEL} c={GOLD} dash="3 2" />
              <L pts={D_GREEN} c={MID} />
              <Squares pts={D_GREEN} c={MID} />
              <L pts={D_RED} c={RED} />
              <Squares pts={D_RED} c={RED} />
              <L pts={D_WHITE} c={WHITE} w={1.5} />
              <Squares pts={D_WHITE} c={WHITE} />
              <DotRun x1={1286} x2={1380} y={107} step={11.7} c="#c8c8c8" />
              <DotRun x1={1286} x2={1380} y={160} step={11.7} c="#c8c8c8" />
              <DotRun x1={1286} x2={1380} y={213} step={11.7} c="#c8c8c8" />
              <DotRun x1={1286} x2={1380} y={322} step={11.7} c={PALE} />
              <DotRun x1={1286} x2={1380} y={343} step={11.7} c={PALE} />
              <Ring x={987} y={118} c={GREEN} />
              <Ring x={976} y={179} c={RED} />
              <Ring x={1103} y={135} c={RED} />
              <Ring x={1322} y={234} c={GREEN} />
              <path d="M1379.5 250l4.5 8h-9z" fill="none" stroke={RED} />
              <rect x="1376" y="258" width="8" height="1" fill={RED} />
              <ChartText x={1394} y={107} $c="#b8b8c0">R3</ChartText>
              <ChartText x={1394} y={160} $c="#b8b8c0">R2</ChartText>
              <ChartText x={1394} y={213} $c="#b8b8c0">R1</ChartText>
              <ChartText x={1397} y={223} $c="#ffffff" xmlSpace="preserve">P:   0.000%</ChartText>
              <ChartText x={1394} y={267} $c={GOLD}>Pivot</ChartText>
              <ChartText x={1375} y={270} $c={LBL}>CS:9653.63</ChartText>
              <ChartText x={1375} y={284} $c={LBL}>P:19.7002</ChartText>
              <ChartText x={1394} y={321} $c={PALE}>S1</ChartText>
            </ChartSvg>
            <Legend $x={3} $y={0}>
              <LegendLine>INDEXDB:DAX - <Tint $c="#e01010">Close</Tint> = 9,653.63</LegendLine>
            </Legend>
            <SignalTag $x={5} $y={184} $bg={DARK}>4.8</SignalTag>
            <SignalTag $x={356} $y={78} $bg={TOR}>RS:9673.33</SignalTag>
            <SignalTag $x={356} $y={92} $bg={TOR}>P:-11.4697</SignalTag>
            <InfoBox $x={2} $y={213} $w={248} $h={90} $bg="#bfbfbf">
              <InfoLine>DAX:   9,653.63 0.48%</InfoLine>
              <InfoLine>Last Signal     : 25/7/2014 16:1</InfoLine>
              <InfoLine>FLAT Entry @ : 0</InfoLine>
              <InfoLine>Current P/L   : 0.00 0.00%</InfoLine>
            </InfoBox>
          </PlotBox>
          <DateStrip>
            <DateLabel $bold $x={73}>Jul 23</DateLabel>
            <DateLabel $bold $x={178}>Jul 24</DateLabel>
            <DateLabel $bold $x={279}>Jul 25</DateLabel>
            <DateLabel $bold $x={384}>Jul 28</DateLabel>
            <DateLabel $bold $x={488}>Jul 29</DateLabel>
          </DateStrip>
        </PlotColumn>
        <Axis $w={60}>
          <AxisContent y0={35} ticks={grid} labels={[[70, "9,850"], [147, "9,750"], [186, "9,700"], [303, "9,550"]]}
            tags={[[100, "9,802.51", TG], [153, "9,734.4", TG, { short: true }], [193, "9,683.8", DARK, { arrow: true, short: true, fg: "#fff" }], [208, "9,666.28", TG], [223, "9,653.63", TR], [260, "9,596.94", TY], [314, "9,528.82", TP], [336, "9,459.48", TP], [351, "9,291.26", TP]]} />
        </Axis>
      </Pane>
      <Pane $h={85} $sep>
        <PlotColumn>
          <PlotBox>
            <ChartSvg width={w} height={84} viewBox={`${ox} 361 ${w} 84`}>
              <Background x0={ox} y0={361} w={w} h={84} bands={bands} grid={[368, 437]} gx1={801} solid />
              <L pts={D_RSI} c="#ffa040" />
            </ChartSvg>
            <Legend $x={3} $y={2}>
              <LegendLine>INDEXDB:DAX - <Tint $c="#ffa040">RSI(14)</Tint> = 48.03</LegendLine>
            </Legend>
          </PlotBox>
        </PlotColumn>
        <Axis $w={60}>
          <AxisContent y0={361} ticks={[368, 437]} labels={[[367, "70"], [436, "30"]]}
            tags={[[399, "48.0312", TO, { arrow: true }]]} />
        </Axis>
      </Pane>
      <Sheets />
    </Client>
  );
};

const ChartThree = () => {
  const ox = 798, oy = 500, w = 709, h = 411;
  const grid = [532, 584, 635, 687, 738, 790, 841, 893];
  const bands = [[861, 897], [967, 1003], [1072, 1108], [1178, 1213], [1283, 1319]];
  return (
    <Client>
      <Pane $h={427}>
        <PlotColumn>
          <PlotBox>
            <ChartSvg width={w} height={h} viewBox={`${ox} ${oy} ${w} ${h}`}>
              <Background x0={ox} y0={oy} w={w} h={h} bands={bands} grid={grid} gx1={802} solid />
              <L pts={[[922, 509], [1390, 509]]} c="#e01010" dash="3 2" />
              <L pts={[[1048, 822], [1378, 822]]} c="#2020ff" dash="3 1" />
              <L pts={[[1130, 841], [1378, 841]]} c="#e01010" dash="3 2" />
              <Candles list={S_C9} ox={800} oy={540} />
              <Candles list={S_C10} ox={1130} oy={640} />
              <L pts={Z9([[207, 463], [233, 463]])} c={RED} />
              <L pts={Z9([[220, 420], [220, 500]])} c={RED} />
              <L pts={Z9([[735, 367], [761, 367]])} c={RED} />
              <L pts={Z9([[748, 335], [748, 395]])} c={RED} />
              <L pts={S_YEL} c={GOLD} dash="3 2" />
              <L pts={S_GREEN} c={MID} />
              <Squares pts={S_GREEN} c={MID} />
              <L pts={S_RED} c={RED} />
              <Squares pts={S_RED} c={RED} />
              <L pts={S_WHITE} c={WHITE} w={1.5} />
              <Squares pts={S_WHITE} c={WHITE} />
              <DotRun x1={1284} x2={1378} y={608} step={11.7} c="#c8c8c8" />
              <DotRun x1={1284} x2={1378} y={658} step={11.7} c="#c8c8c8" />
              <DotRun x1={1284} x2={1378} y={709} step={11.7} c="#c8c8c8" />
              <DotRun x1={1284} x2={1378} y={816} step={11.7} c={PALE} />
              <DotRun x1={1284} x2={1378} y={872} step={11.7} c={PALE} />
              <DotRun x1={1284} x2={1378} y={912} step={11.7} c={PALE} />
              <Ring x={979} y={652} c={GREEN} />
              <Ring x={967} y={731} c={RED} />
              <Ring x={1107} y={675} c={RED} />
              <Ring x={1296} y={744} c={GREEN} />
              <path d="M1126 661h10l-5 9z" fill="none" stroke={GREEN} />
              <DownArrow x={1154} y={676} c={RED} />
              <path d="M1248 796l5 8h-10z M1243 805h10" fill="none" stroke={RED} />
              <UpArrow x={1330} y={705} c={GREEN} />
              <ChartText x={1392} y={608} $c="#b8b8c0">R3</ChartText>
              <ChartText x={1392} y={659} $c="#b8b8c0">R2</ChartText>
              <ChartText x={1392} y={710} $c="#b8b8c0">R1</ChartText>
              <ChartText x={1396} y={711} $c="#ffffff" xmlSpace="preserve">P!  -0.082%</ChartText>
              <ChartText x={1392} y={765} $c={GOLD}>Pivot</ChartText>
              <ChartText x={1392} y={816} $c={PALE}>S1</ChartText>
              <ChartText x={1392} y={872} $c={PALE}>S2</ChartText>
              <ChartText x={1126} y={638} $c={LBL}>SL:3202.08</ChartText>
              <ChartText x={1126} y={653} $c={LBL}>P:43.47</ChartText>
              <ChartText x={1243} y={830} $c={LBL}>CS:3162.49</ChartText>
              <ChartText x={1243} y={845} $c={LBL}>P:20.6699</ChartText>
            </ChartSvg>
            <Legend $x={3} $y={0}>
              <LegendLine>INDEXSTOXX:SX5E -</LegendLine>
              <LegendLine><Tint $c="#e01010">Close</Tint> = 3,190.54</LegendLine>
            </Legend>
            <SignalTag $x={350} $y={47} $bg={RED}>ES:3183.16</SignalTag>
            <SignalTag $x={526} $y={211} $bg={DARK}>EL:3193.17</SignalTag>
            <InfoBox $x={2} $y={316} $w={248} $h={90} $bg="#005000">
              <InfoLine>SX5E:   3,190.54 0.45%</InfoLine>
              <InfoLine>Last Signal     : 29/7/2014 13:1</InfoLine>
              <InfoLine>LONG Entry @: 3193.17</InfoLine>
              <InfoLine>Current P/L   : -2.63 -0.08%</InfoLine>
            </InfoBox>
          </PlotBox>
          <DateStrip>
            <DateLabel $bold $x={62}>Jul 23</DateLabel>
            <DateLabel $bold $x={167}>Jul 24</DateLabel>
            <DateLabel $bold $x={273}>Jul 25</DateLabel>
            <DateLabel $bold $x={378}>Jul 28</DateLabel>
            <DateLabel $bold $x={483}>Jul 29</DateLabel>
          </DateStrip>
        </PlotColumn>
        <Axis $w={60}>
          <AxisContent y0={500} ticks={grid} labels={[[531, "3,260"], [583, "3,240"], [634, "3,220"], [737, "3,180"], [789, "3,160"]]}
            tags={[[504, "3,269.32", TR], [585, "3,231.03", TG], [600, "3,231.03", TG], [636, "3,211.2", TG, { short: true }], [651, "3,211.2", TG, { short: true }], [674, "3,191.38", TG], [689, "3,191.38", TG], [704, "3,190.54", TR], [743, "3,169.61", TY], [758, "3,169.61", TY, { arrow: true }], [809, "3,149.79", TP], [824, "3,149.79", TP], [839, "3,147.47", "#0000ff", { fg: "#fff" }], [854, "3,139.86", TR], [869, "3,128.02", TP], [884, "3,128.02", TP], [904, "3,108.2", TP, { short: true }], [919, "3,108.2", TP, { short: true }]]} />
        </Axis>
      </Pane>
      <Sheets />
    </Client>
  );
};

const Minimized = ({ l, w }) => (
  <MiniWin $l={l} $w={w}>
    <AppIcon />
    <MiniText>IND...</MiniText>
    <MiniButtons>
      <CapButton><RestoreGlyph /></CapButton>
      <CapButton><MaxGlyph /></CapButton>
      <CapButton><CloseGlyph /></CapButton>
    </MiniButtons>
  </MiniWin>
);

export default function App() {
  return (
    <Desktop>
      <Global />
      <OuterFrame />
      <TopNavyEdge />
      <Minimized l={325} w={156} />
      <Minimized l={486} w={155} />
      <Minimized l={646} w={158} />
      <Win $l={5} $t={6} $w={785} $h={919} $pl={7} $pr={9} $pb={7}>
        <WindowTitle text="INDEXFTSE:FTSEMIB -  - Hourly" h={29} pt={6} pl={7} pr={9} />
        <ChartOne />
      </Win>
      <Win $l={792} $t={6} $w={781} $h={463} $pl={5} $pr={6} $pb={7}>
        <WindowTitle text="INDEXDB:DAX -  - Hourly" h={29} pt={6} pl={5} pr={6} />
        <ChartTwo />
      </Win>
      <Win $l={791} $t={472} $w={783} $h={478} $pl={7} $pr={7} $pb={6} $active>
        <WindowTitle text="INDEXSTOXX:SX5E -  - Hourly" h={28} pt={5} pl={7} pr={7} active />
        <ChartThree />
      </Win>
      <Cursor width="13" height="20" viewBox="0 0 13 20">
        <path d="M1 1v15l3.5-3.5 2.5 6 2.5-1-2.5-6h5z" fill="#fff" stroke="#111" />
      </Cursor>
    </Desktop>
  );
}
